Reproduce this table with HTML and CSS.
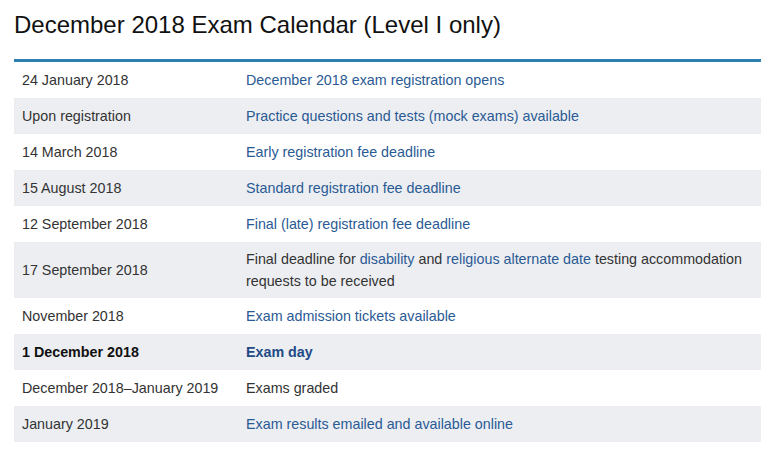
FILE: index.html
```html
<!DOCTYPE html>
<html>
<head>
<meta charset="utf-8">
<link rel="stylesheet" href="styles.css">
</head>
<body>
<div class="page">
  <h1 class="title">December 2018 Exam Calendar (Level I only)</h1>
  <table class="cal">
    <colgroup><col class="c1"><col class="c2"></colgroup>
    <tr><td>24 January 2018</td><td><a>December 2018 exam registration opens</a></td></tr>
    <tr><td>Upon registration</td><td><a>Practice questions and tests (mock exams) available</a></td></tr>
    <tr><td>14 March 2018</td><td><a>Early registration fee deadline</a></td></tr>
    <tr><td>15 August 2018</td><td><a>Standard registration fee deadline</a></td></tr>
    <tr><td>12 September 2018</td><td><a>Final (late) registration fee deadline</a></td></tr>
    <tr class="tall"><td>17 September 2018</td><td><span class="ln">Final deadline for <a>disability</a> and <a>religious alternate date</a> testing accommodation</span><span class="ln">requests to be received</span></td></tr>
    <tr><td>November 2018</td><td><a>Exam admission tickets available</a></td></tr>
    <tr class="bold"><td>1 December 2018</td><td><a>Exam day</a></td></tr>
    <tr><td>December 2018–January 2019</td><td>Exams graded</td></tr>
    <tr><td>January 2019</td><td><a>Exam results emailed and available online</a></td></tr>
  </table>
</div>
</body>
</html>
```
FILE: styles.css
```css
html, body { margin: 0; padding: 0; background: #fff; }
.page {
  padding: 0 12px 0 14px;
  font-family: "Liberation Sans", Arial, sans-serif;
  color: #333;
}
.title {
  margin: 0;
  padding-top: 11px;
  height: 59px;
  box-sizing: border-box;
  font-size: 24px;
  font-weight: normal;
  line-height: 28px;
  color: #111;
}
.cal {
  width: 747px;
  table-layout: fixed;
  border-collapse: collapse;
  border-top: 3px solid #2b80b0;
  font-size: 14.3px;
  line-height: 20px;
}
.cal col.c1 { width: 224px; }
.cal td {
  padding: 8px 14px 8px 8px;
  vertical-align: middle;
  height: 20px;
}
.cal tr:nth-child(even) td { background: #eceef2; }
.cal a { color: #2a5a94; text-decoration: none; }
.cal .ln { display: block; white-space: nowrap; }
.cal tr.tall td { line-height: 22px; padding-top: 6px; padding-bottom: 6px; }
.cal tr.bold td { font-weight: bold; color: #111; }
.cal tr.bold a { color: #1f4a86; }
```
